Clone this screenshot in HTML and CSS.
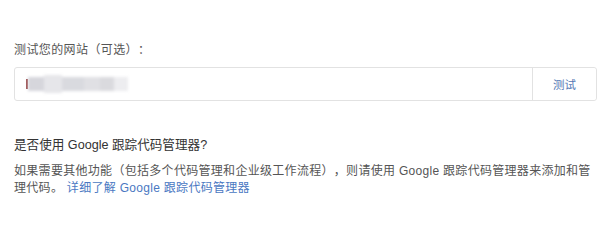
FILE: index.html
```html
<!DOCTYPE html>
<html lang="zh-CN">
<head>
<meta charset="utf-8">
<title>测试您的网站</title>
<link rel="stylesheet" href="styles.css">
</head>
<body>
<main class="page">
  <section class="test-site">
    <label class="field-label" for="site">测试您的网站（可选）：</label>
    <div class="input-group">
      <div class="input-field" id="site">
        <span class="caret"></span>
        <span class="redacted" aria-hidden="true">
          <i class="blk b1"></i><i class="blk b2"></i><i class="blk b3"></i><i class="blk b4"></i><i class="blk b5"></i><i class="blk b6"></i>
        </span>
      </div>
      <button class="test-btn" type="button">测试</button>
    </div>
  </section>
  <section class="gtm">
    <h2 class="gtm-title">是否使用 Google 跟踪代码管理器?</h2>
    <p class="gtm-text">如果需要其他功能（包括多个代码管理和企业级工作流程），则请使用 Google 跟踪代码管理器来添加和管理代码。 <a class="link" href="#">详细了解 Google 跟踪代码管理器</a></p>
  </section>
</main>
</body>
</html>
```
FILE: styles.css
```css
html, body {
  margin: 0;
  padding: 0;
  background: #ffffff;
}
.page {
  width: 600px;
  box-sizing: border-box;
  padding: 41px 3px 0 14px;
  font-family: "Liberation Sans", "Noto Sans CJK SC", sans-serif;
  color: #444;
  text-spacing-trim: space-all;
}
.test-site {
  display: flex;
  flex-direction: column;
  gap: 8px;
}
.field-label {
  font-size: 12px;
  line-height: 18px;
  letter-spacing: 0.4px;
  color: #555;
}
.input-group {
  display: flex;
  height: 34px;
  border: 1px solid #e2e2e2;
  border-radius: 3px;
  box-sizing: border-box;
}
.input-field {
  flex: 1;
  display: flex;
  align-items: center;
  padding-left: 11px;
}
.caret {
  width: 2px;
  height: 10px;
  background: #9a4b4b;
}
.redacted {
  display: flex;
  align-items: center;
  height: 20px;
  filter: blur(1.6px);
}
.blk {
  display: block;
  height: 14px;
  background: #dcdce2;
}
.b1 { width: 16px; background: #d6d6dc; }
.b2 { width: 18px; background: #e6e6ea; height: 18px; }
.b3 { width: 22px; background: #d9dadf; }
.b4 { width: 16px; background: #e0e0e4; }
.b5 { width: 14px; background: #dadade; }
.b6 { width: 14px; background: #ededf0; }
.test-btn {
  width: 64px;
  border: none;
  border-left: 1px solid #e2e2e2;
  background: #fff;
  color: #5579b5;
  font-family: "Liberation Sans", "Noto Sans CJK SC", sans-serif;
  font-size: 11.5px;
  padding: 0;
  border-radius: 0 3px 3px 0;
}
.gtm {
  margin-top: 35px;
}
.gtm-title {
  margin: 0;
  font-size: 12.6px;
  line-height: 18px;
  font-weight: normal;
  color: #333;
}
.gtm-text {
  margin: 9px 0 0;
  font-size: 12px;
  line-height: 17px;
  letter-spacing: 0.3px;
  color: #555;
}
.link {
  color: #4a78c2;
  text-decoration: none;
}
```
